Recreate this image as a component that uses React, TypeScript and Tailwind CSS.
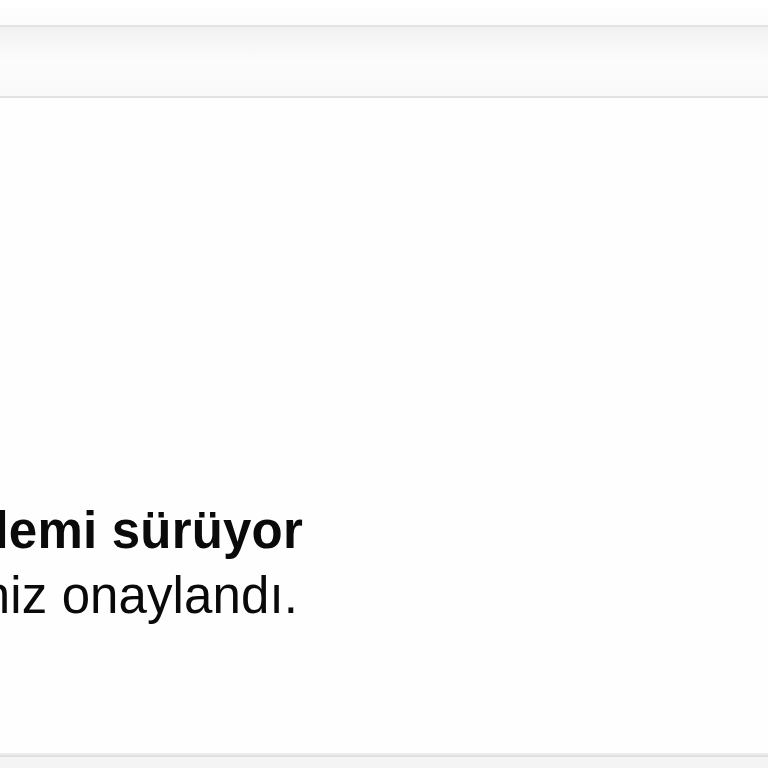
export default function App() {
  return (
    <div className="w-[768px] h-[768px] overflow-hidden bg-[#fefefe] flex flex-col" style={{ fontFamily: '"Liberation Sans", Arial, sans-serif' }}>
      <div className="h-[25px] bg-gradient-to-b from-[#ffffff] to-[#fcfcfc]" />
      <div className="h-[73px] border-t-2 border-b-2 border-[#e2e2e2] bg-gradient-to-b from-[#f2f2f2] via-[#fcfcfc] to-[#f8f8f8]">
        <div className="h-[2px] bg-[#f0f0f0]" />
      </div>
      <div className="flex-1 flex flex-col justify-end pb-[125px] overflow-hidden">
        <div className="w-[303px] flex justify-end whitespace-nowrap">
          <span className="text-[51px] leading-[65px] font-bold text-[#0a0a0a] tracking-[0.2px]">İşlemi sürüyor</span>
        </div>
        <div className="w-[298px] flex justify-end whitespace-nowrap">
          <span className="text-[51px] leading-[65px] text-[#0a0a0a] tracking-[0.1px]">Ödemeniz onaylandı.</span>
        </div>
      </div>
      <div className="h-[2px] bg-[#ececec]" />
      <div className="h-[2px] bg-[#e0e0e0]" />
      <div className="h-[11px] bg-[#f4f4f4]" />
    </div>
  );
}
